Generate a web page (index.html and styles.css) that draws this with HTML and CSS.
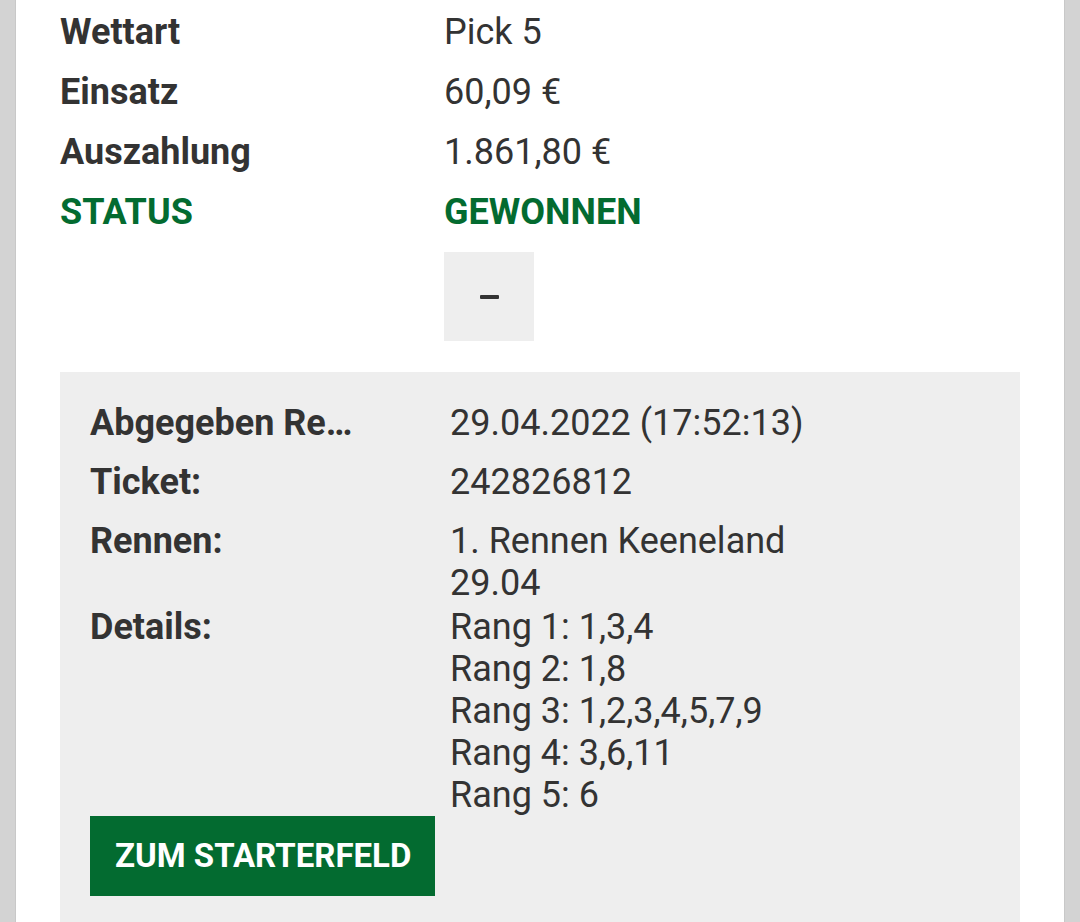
FILE: index.html
```html
<!DOCTYPE html>
<html lang="de">
<head>
    <meta charset="UTF-8">
    <title>Wettdetails</title>
    <link rel="stylesheet" href="styles.css">
</head>
<body>
    <div class="sheet">
        <div class="summary">
            <div class="row">
                <div class="label">Wettart</div>
                <div class="value">Pick 5</div>
            </div>
            <div class="row">
                <div class="label">Einsatz</div>
                <div class="value">60,09 €</div>
            </div>
            <div class="row">
                <div class="label">Auszahlung</div>
                <div class="value">1.861,80 €</div>
            </div>
            <div class="row status">
                <div class="label">STATUS</div>
                <div class="value">GEWONNEN</div>
            </div>
            <div class="row">
                <div></div>
                <div><button class="toggle-btn"><span class="minus"></span></button></div>
            </div>
        </div>

        <div class="details-panel">
            <div class="drow">
                <div class="label" title="Abgegeben Rennen">Abgegeben Re…</div>
                <div class="value">29.04.2022 (17:52:13)</div>
            </div>
            <div class="drow">
                <div class="label">Ticket:</div>
                <div class="value">242826812</div>
            </div>
            <div class="drow">
                <div class="label">Rennen:</div>
                <div class="value">1. Rennen Keeneland<br>29.04</div>
            </div>
            <div class="drow">
                <div class="label">Details:</div>
                <div class="value">
                    Rang 1: 1,3,4<br>
                    Rang 2: 1,8<br>
                    Rang 3: 1,2,3,4,5,7,9<br>
                    Rang 4: 3,6,11<br>
                    Rang 5: 6
                </div>
            </div>
            <a href="#" class="starter-btn">ZUM STARTERFELD</a>
        </div>
    </div>
</body>
</html>
```

FILE: styles.css
```css
html, body {
    height: 100%;
}
body {
    margin: 0;
    padding: 0;
    background-color: #d3d3d3;
    font-family: Roboto, 'Liberation Sans', sans-serif;
    color: #333333;
    overflow: hidden;
}
.sheet {
    margin: 0 15px;
    min-height: 100%;
    background-color: #ffffff;
    border-left: 1px solid #c8c8c8;
    border-right: 1px solid #c8c8c8;
    padding: 2px 44px 0;
}
.row {
    display: grid;
    grid-template-columns: 40% 60%;
    font-size: 36px;
    line-height: 60px;
}
.row .label {
    font-weight: bold;
}
.row.status {
    color: #036b30;
    font-weight: bold;
}
.toggle-btn {
    display: flex;
    align-items: center;
    justify-content: center;
    width: 90px;
    height: 89px;
    margin-top: 10px;
    padding: 0;
    border: none;
    background-color: #eeeeee;
    cursor: pointer;
}
.minus {
    display: block;
    width: 19px;
    height: 4px;
    border-radius: 1px;
    background-color: #333333;
}
.details-panel {
    margin-top: 31px;
    padding: 30px 30px 40px;
    background-color: #eeeeee;
}
.drow {
    display: grid;
    grid-template-columns: 40% 60%;
    min-height: 59px;
    padding-bottom: 2px;
    box-sizing: border-box;
    font-size: 36px;
    line-height: 42px;
}
.drow .label {
    font-weight: bold;
    white-space: nowrap;
}
.starter-btn {
    display: inline-block;
    margin-top: -2px;
    padding: 0 24px 0 25px;
    height: 80px;
    line-height: 80px;
    background-color: #036b30;
    color: #ffffff;
    font-size: 33px;
    font-weight: bold;
    text-decoration: none;
}
```
